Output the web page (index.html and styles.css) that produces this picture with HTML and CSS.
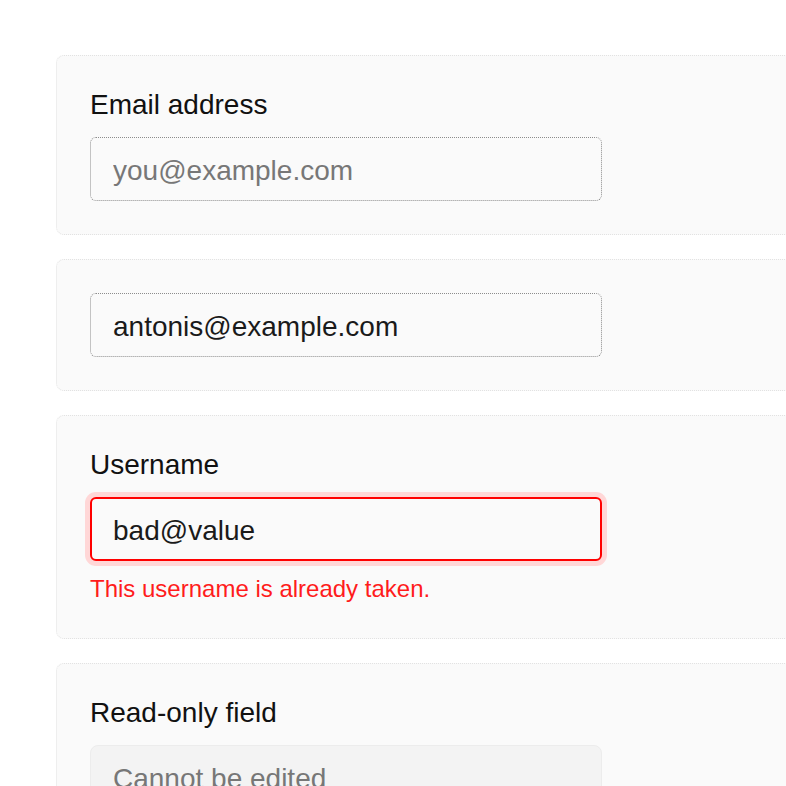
FILE: index.html
```html
<!DOCTYPE html>
<html lang="en">
<head>
<meta charset="utf-8">
<title>Form fields</title>
<link rel="stylesheet" href="styles.css">
</head>
<body>
  <main class="stack">
    <section class="card">
      <label class="label" for="email">Email address</label>
      <input class="field" id="email" type="text" placeholder="you@example.com">
    </section>
    <section class="card">
      <input class="field" type="text" value="antonis@example.com" aria-label="Email">
    </section>
    <section class="card">
      <label class="label" for="username">Username</label>
      <input class="field field-error" id="username" type="text" value="bad@value">
      <p class="error">This username is already taken.</p>
    </section>
    <section class="card">
      <label class="label" for="ro">Read-only field</label>
      <input class="field field-readonly" id="ro" type="text" placeholder="Cannot be edited" readonly>
    </section>
  </main>
</body>
</html>
```
FILE: styles.css
```css
html, body {
  margin: 0;
  overflow: hidden;
  background: #ffffff;
}
body {
  font-family: "Liberation Sans", Arial, sans-serif;
  color: #111111;
  padding: 55px 0 0 56px;
}
.stack {
  display: flex;
  flex-direction: column;
  gap: 24px;
  width: 900px;
}
.card {
  display: flex;
  flex-direction: column;
  align-items: flex-start;
  background: #fafafa;
  border: 1px dotted #e2e2e2;
  border-radius: 8px;
  padding: 33px;
}
.label {
  font-size: 28px;
  line-height: 28px;
  padding-top: 2px;
  color: #111111;
  margin-bottom: 18px;
}
.field {
  box-sizing: border-box;
  width: 512px;
  height: 64px;
  margin: 0;
  padding: 4px 22px 0;
  font-family: "Liberation Sans", Arial, sans-serif;
  font-size: 28px;
  color: #1a1a1a;
  background: #fafafa;
  border: 1px dotted #8c8c8c;
  border-radius: 6px;
  outline: none;
}
.field::placeholder {
  color: #777777;
  opacity: 1;
}
.field-error {
  border: 2px solid #ff0000;
  padding: 4px 21px 0;
  box-shadow: 0 0 0 5px #ffd7d7;
}
.field-readonly {
  background: #f3f3f3;
  border: 1px solid #ececec;
  border-radius: 8px;
}
.error {
  margin: 13px 0 0;
  font-size: 24px;
  line-height: 30px;
  padding-bottom: 1px;
  color: #ff1c1c;
}
```
